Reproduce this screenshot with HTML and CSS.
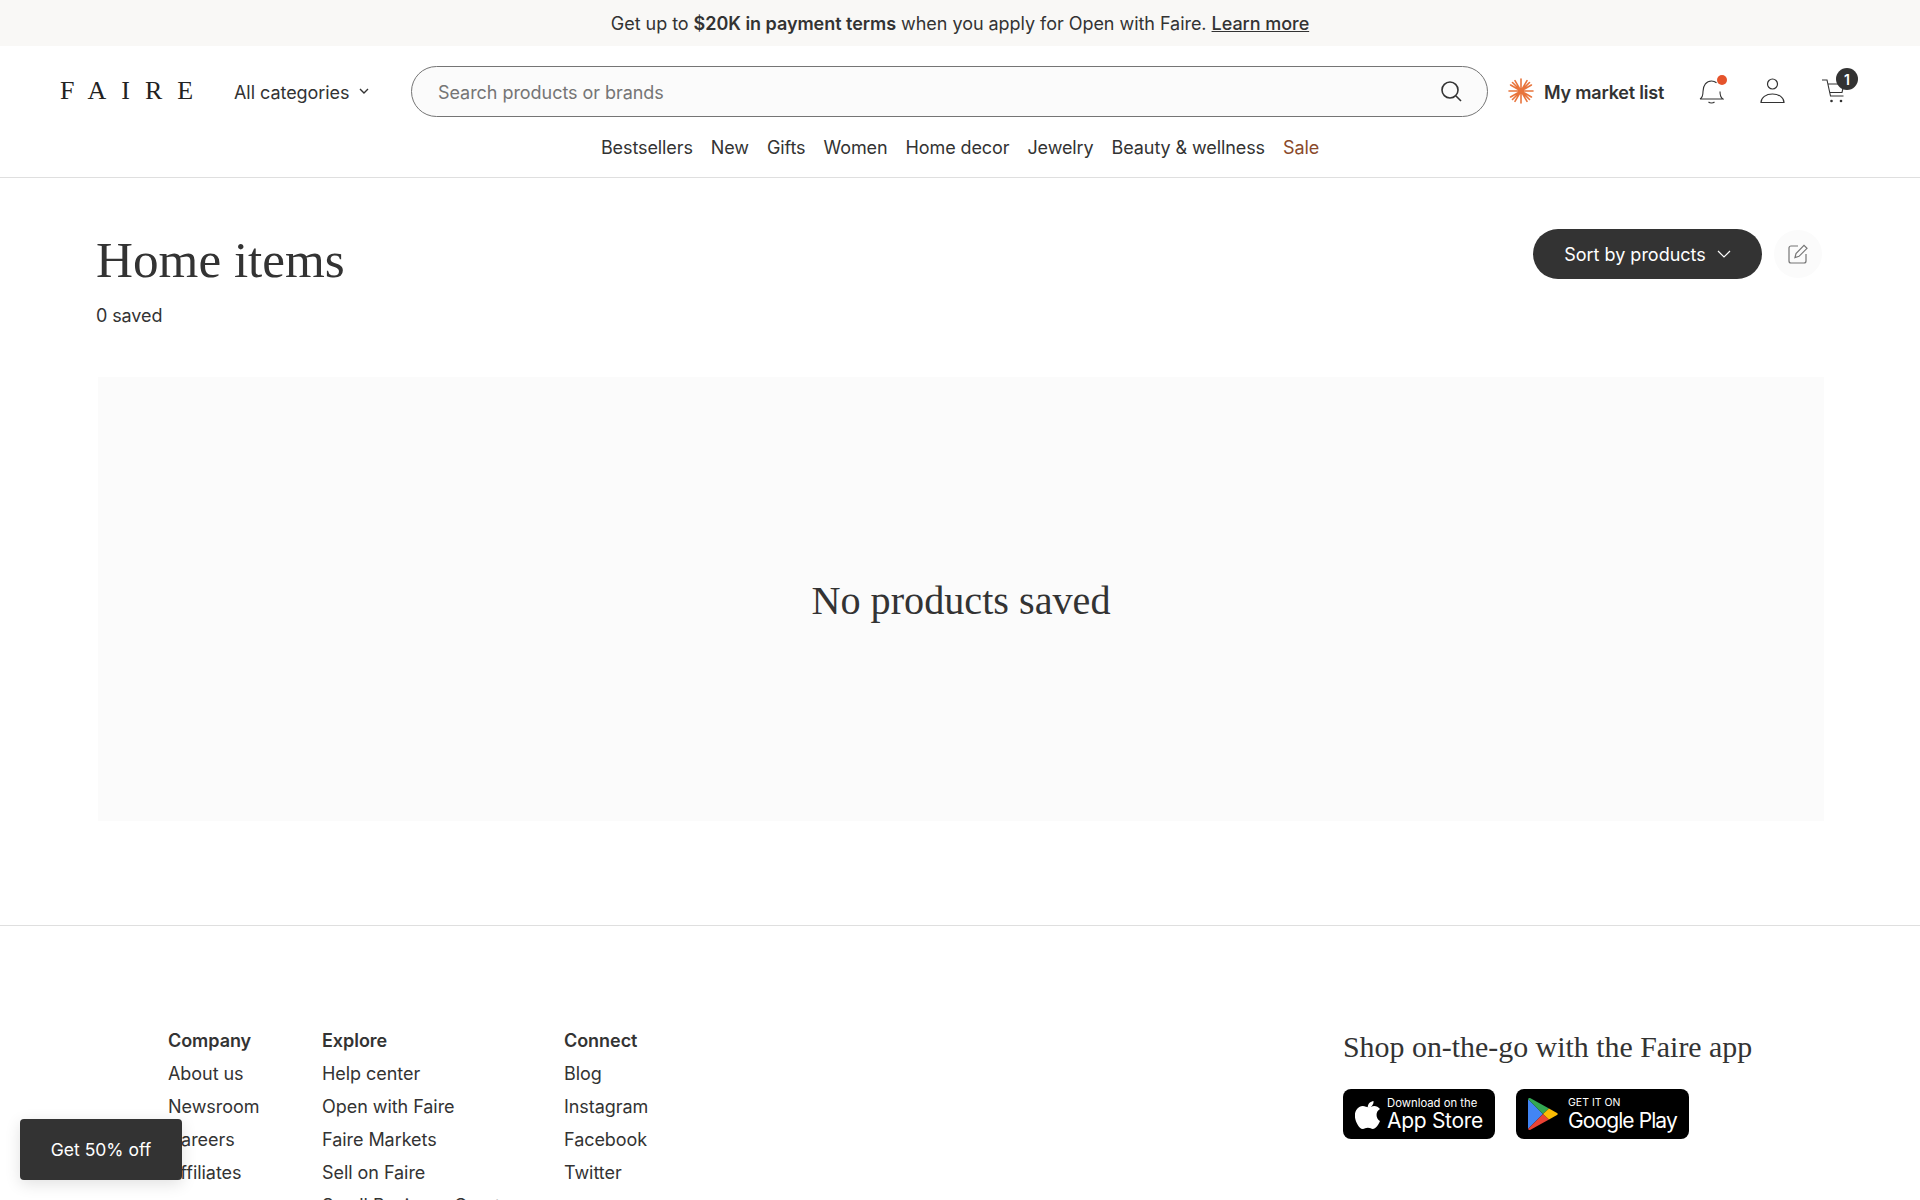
FILE: index.html
```html
<!DOCTYPE html>
<html lang="en">
<head>
<meta charset="utf-8">
<title>Home items - Faire</title>
<link rel="stylesheet" href="styles.css">
</head>
<body>
<div class="page">
  <div class="banner"><span>Get up to <b>$20K in payment terms</b> when you apply for Open with Faire. <a href="#">Learn more</a></span></div>
  <header class="header">
    <div class="top-row">
      <div class="logo">FAIRE</div>
      <div class="cats"><span class="nudge">All categories</span>
        <svg class="cats-chev" width="10" height="6" viewBox="0 0 10 6"><path d="M1 1l4 4 4-4" fill="none" stroke="#333" stroke-width="1.4"/></svg>
      </div>
      <div class="search">
        <span class="search-ph nudge">Search products or brands</span>
        <svg width="24" height="24" viewBox="0 0 24 24"><circle cx="11" cy="11" r="8" fill="none" stroke="#333" stroke-width="1.6"/><path d="M17 17l5 5" stroke="#333" stroke-width="1.6"/></svg>
      </div>
      <div class="market">
        <svg width="26" height="26" viewBox="0 0 26 26"><g stroke="#e8743b" stroke-width="1.600" stroke-linecap="round"><path d="M13 1v24M1 13h24M4.500 4.500l17 17M21.500 4.500l-17 17M7 2.600l12 20.800M19 2.600L7 23.400M2.600 7l20.800 12M23.400 7L2.600 19"/></g></svg>
        <span class="nudge">My market list</span>
      </div>
      <div class="icons">
        <div class="icon-box">
          <svg width="25" height="26" viewBox="0 0 25 26"><path d="M1 21c2.300-1.300 3-3.700 3-7.500C4 7 7.500 3 12.500 3c2 0 3.600.6 5 1.700M21 13.500c0 3.800.7 6.200 3 7.500H1" fill="none" stroke="#333" stroke-width="1.100"/><path d="M9.500 24c1.500 1.300 4.500 1.300 6 0" fill="none" stroke="#333" stroke-width="1.100"/></svg>
          <span class="dot"></span>
        </div>
        <div class="icon-box">
          <svg width="25" height="26" viewBox="0 0 25 26"><circle cx="12.500" cy="6" r="5" fill="none" stroke="#333" stroke-width="1.200"/><path d="M1 24.500c0-5 5-8.500 11.500-8.500S24 19.500 24 24.500z" fill="none" stroke="#333" stroke-width="1.200"/></svg>
        </div>
        <div class="icon-box">
          <svg width="25" height="26" viewBox="0 0 25 26"><path d="M1 2h5l3.500 16h13M7 6h16l-2 8.500H8.500" fill="none" stroke="#333" stroke-width="1.100"/><circle cx="10.500" cy="23" r="1.300" fill="#333"/><circle cx="20" cy="23" r="1.300" fill="#333"/></svg>
          <span class="cart-count">1</span>
        </div>
      </div>
    </div>
    <nav class="nav">
      <a href="#">Bestsellers</a><a href="#">New</a><a href="#">Gifts</a><a href="#">Women</a><a href="#">Home decor</a><a href="#">Jewelry</a><a href="#">Beauty &amp; wellness</a><a href="#" class="sale">Sale</a>
    </nav>
  </header>
  <main class="main">
    <div class="title-row">
      <div>
        <h1 class="title">Home items</h1>
        <div class="saved">0 saved</div>
      </div>
      <div class="actions">
        <button class="sort"><span>Sort by products</span>
          <svg width="14" height="8" viewBox="0 0 14 8"><path d="M1 1l6 6 6-6" fill="none" stroke="#fff" stroke-width="1.2"/></svg>
        </button>
        <div class="edit">
          <svg width="22" height="22" viewBox="0 0 22 22"><path d="M11 3H4a2 2 0 0 0-2 2v13a2 2 0 0 0 2 2h13a2 2 0 0 0 2-2v-7" fill="none" stroke="#757575" stroke-width="1.200"/><path d="M8 14.500l1-4L17 2.300l3 3-8 8z" fill="none" stroke="#757575" stroke-width="1.200"/></svg>
        </div>
      </div>
    </div>
    <div class="empty"><div class="empty-text">No products saved</div></div>
  </main>
  <footer class="footer">
    <div class="cols">
      <div class="col col-company">
        <h4>Company</h4><a href="#">About us</a><a href="#">Newsroom</a><a href="#">Careers</a><a href="#">Affiliates</a>
      </div>
      <div class="col col-explore">
        <h4>Explore</h4><a href="#">Help center</a><a href="#">Open with Faire</a><a href="#">Faire Markets</a><a href="#">Sell on Faire</a><a href="#">Small Business Grants</a>
      </div>
      <div class="col col-connect">
        <h4>Connect</h4><a href="#">Blog</a><a href="#">Instagram</a><a href="#">Facebook</a><a href="#">Twitter</a>
      </div>
    </div>
    <div class="app">
      <div class="app-title">Shop on-the-go with the Faire app</div>
      <div class="badges">
        <div class="badge badge-apple">
          <svg width="26" height="30" viewBox="0 0 26 30"><path d="M18.500 2c.2 2-.5 3.600-1.600 4.900-1.100 1.300-2.600 2.100-4.200 2-.2-1.900.6-3.600 1.600-4.800C15.500 2.900 17.200 2.100 18.500 2z" fill="#fff"/><path d="M25 22c-.7 1.600-1 2.300-1.900 3.700-1.300 1.900-3 4.200-5.200 4.200-1.900 0-2.400-1.200-5-1.200s-3.200 1.200-5.100 1.200c-2.100 0-3.800-2.100-5-4C-.6 20.500-1 14.400 1.300 10.900 3 8.400 5.500 7.100 7.800 7.100s3.900 1.300 5.800 1.300c1.900 0 3-1.300 5.700-1.300 2 0 4.200 1.100 5.700 3-5 2.700-4.200 9.900 0 11.900z" fill="#fff"/></svg>
          <div class="badge-text"><span class="badge-small">Download on the</span><span class="badge-big">App Store</span></div>
        </div>
        <div class="badge badge-google">
          <svg width="32" height="34" viewBox="0 0 32 34"><path d="M1 2v30l15-15z" fill="#4285f4"/><path d="M1 2c.5-1 1.500-1.300 2.500-.8L22 11.500 16 17z" fill="#34a853"/><path d="M1 32c.5 1 1.500 1.300 2.500.8L22 22.500 16 17z" fill="#ea4335"/><path d="M22 11.500l8 4.500c1 .6 1 1.400 0 2l-8 4.500L16 17z" fill="#fbbc04"/></svg>
          <div class="badge-text"><span class="badge-small badge-caps">GET IT ON</span><span class="badge-big badge-play">Google Play</span></div>
        </div>
      </div>
    </div>
  </footer>
  <button class="promo">Get 50% off</button>
</div>
</body>
</html>
```
FILE: styles.css
```css
* { box-sizing: border-box; }
html, body { margin: 0; padding: 0; }
body { font-family: Inter, "Liberation Sans", sans-serif; color: #333; background: #fff; }
a { color: inherit; text-decoration: none; }
.page { height: 1200px; overflow: hidden; position: relative; }

.banner { height: 46px; background: #f9f8f6; display: flex; align-items: center; justify-content: center; font-size: 18px; letter-spacing: -0.04px; }
.banner b { font-weight: 600; }
.banner a { font-weight: 500; text-decoration: underline; }

.header { height: 132px; border-bottom: 1px solid #dfdfdf; }
.top-row { display: flex; align-items: center; padding: 20px 0 0 60px; height: 70px; }
.nudge { padding-top: 2px; }
.logo { font-family: "Liberation Serif", serif; font-size: 26px; letter-spacing: 15px; width: 174px; color: #222; flex: none; }
.cats { display: flex; align-items: center; gap: 9px; font-size: 18px; letter-spacing: -0.05px; width: 177px; flex: none; }
.search { width: 1077px; flex: none; height: 51px; border: 1px solid #757575; border-radius: 26px; background: #fbfbfb; display: flex; align-items: center; justify-content: space-between; padding: 0 24px 0 26px; }
.search-ph { font-size: 18px; color: #757575; letter-spacing: -0.05px; }
.market { display: flex; align-items: center; gap: 10px; margin-left: 20px; width: 191px; font-weight: 600; font-size: 18px; letter-spacing: -0.2px; flex: none; }
.icons { display: flex; gap: 36px; flex: none; }
.icon-box { width: 25px; height: 26px; position: relative; }
.dot { position: absolute; top: -3px; right: -3px; width: 10px; height: 10px; border-radius: 50%; background: #e5532b; }
.cart-count { position: absolute; top: -10px; right: -12px; width: 22px; height: 22px; border-radius: 50%; background: #333; color: #fff; font-size: 14px; font-weight: 600; display: flex; align-items: center; justify-content: center; }
.nav { display: flex; justify-content: center; gap: 18px; font-size: 18px; letter-spacing: -0.1px; margin-top: 21px; }
.sale { color: #8a4a2b; }

.main { padding: 0 96px; height: 747px; }
.title-row { display: flex; justify-content: space-between; align-items: flex-start; padding-top: 52px; height: 199px; }
.title { margin: 0; font-family: "Liberation Serif", serif; font-weight: 400; font-size: 51.200px; line-height: 60px; }
.saved { margin-top: 15px; font-size: 18px; letter-spacing: -0.1px; }
.actions { display: flex; align-items: center; gap: 12px; margin-top: -1px; }
.sort { width: 229px; height: 50px; border: 0; border-radius: 25px; background: #333; color: #fff; font-family: inherit; font-size: 18px; display: flex; align-items: center; justify-content: center; gap: 11px; }
.edit { width: 48px; height: 48px; border-radius: 50%; background: #fbfbfb; display: flex; align-items: center; justify-content: center; margin-right: 2px; }
.empty { height: 444px; margin: 0 0 0 2px; background: #fbfbfb; display: flex; align-items: center; justify-content: center; padding-top: 3px; }
.empty-text { font-family: "Liberation Serif", serif; font-size: 40.200px; }

.footer { border-top: 1px solid #dfdfdf; display: flex; justify-content: space-between; padding: 98px 131px 0 168px; }
.cols { display: flex; }
.col { display: flex; flex-direction: column; font-size: 18px; line-height: 33px; letter-spacing: -0.05px; }
.col h4 { margin: 0; font-size: 18px; font-weight: 600; }
.col-company { width: 154px; }
.col-explore { width: 242px; }
.app { width: 446px; margin-top: 5px; }
.app-title { font-family: "Liberation Serif", serif; font-size: 29.900px; line-height: 36px; }
.badges { display: flex; gap: 21px; margin-top: 24px; }
.badge { background: #000; border-radius: 8px; height: 50px; display: flex; align-items: center; color: #fff; }
.badge-apple { width: 152px; padding-left: 12px; gap: 6px; }
.badge-google { width: 173px; padding-left: 11px; gap: 9px; }
.badge-text { display: flex; flex-direction: column; }
.badge-small { font-size: 11.300px; line-height: 12px; }
.badge-caps { font-size: 10.500px; }
.badge-big { font-size: 21px; line-height: 23px; letter-spacing: -0.3px; }
.badge-play { letter-spacing: -0.9px; }
.promo { position: absolute; left: 20px; top: 1119px; width: 162px; height: 61px; border: 0; border-radius: 4px; background: #333; color: #fff; font-family: inherit; font-size: 17.500px; box-shadow: 0 4px 16px rgba(0,0,0,.12); }
```
